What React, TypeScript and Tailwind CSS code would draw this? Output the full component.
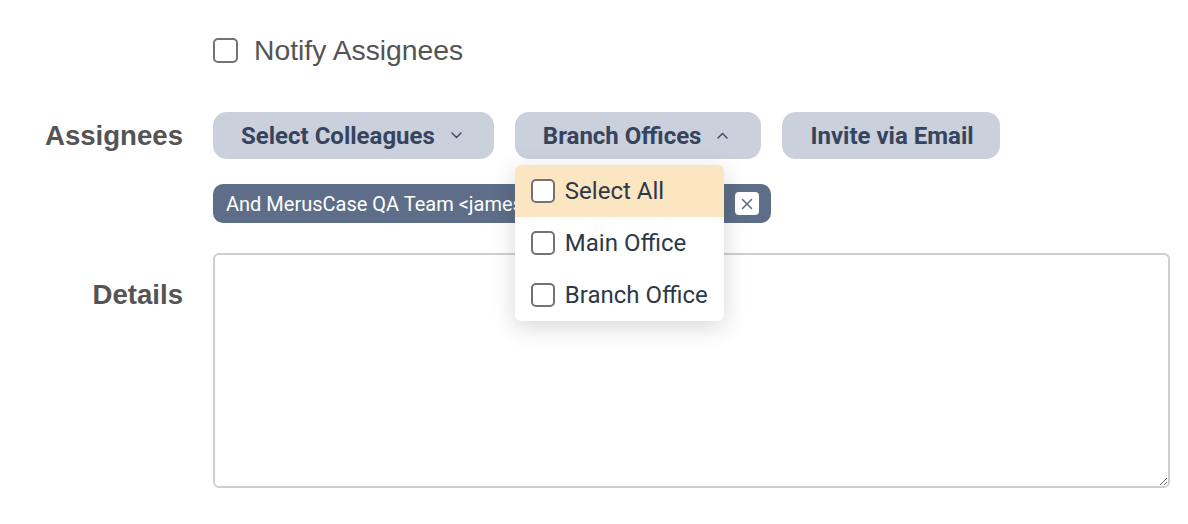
import { useState } from "react";

const offices = ["Select All", "Main Office", "Branch Office"];

function Chevron({ up = false }: { up?: boolean }) {
  return (
    <svg width="11" height="7" viewBox="0 0 11 7" className="shrink-0" aria-hidden>
      <polyline
        points={up ? "1,6 5.5,1.5 10,6" : "1,1 5.5,5.5 10,1"}
        fill="none"
        stroke="currentColor"
        strokeWidth="1.4"
        strokeLinecap="round"
        strokeLinejoin="round"
      />
    </svg>
  );
}

function Box({ size = 25 }: { size?: number }) {
  return (
    <span
      className="inline-block shrink-0 rounded-[5px] border-2 border-[#737373] bg-white"
      style={{ width: size, height: size }}
    />
  );
}

export default function App() {
  const [open] = useState(true);

  return (
    <div className="min-h-[524px] bg-white pt-[34px] font-['Roboto',sans-serif]">
      <div className="grid grid-cols-[183px_957px] gap-x-[30px]">
        {/* notify row */}
        <div />
        <label className="flex h-[32px] items-center gap-4 font-['Liberation_Sans',Arial,sans-serif] text-[28.3px] text-[#545454]">
          <Box />
          <span>Notify Assignees</span>
        </label>

        {/* assignees */}
        <div className="mt-[46px] flex h-[47px] items-center justify-end font-['Liberation_Sans',Arial,sans-serif] text-[27.6px] font-bold text-[#545454]">
          Assignees
        </div>
        <div className="mt-[46px]">
          <div className="flex gap-[21px]">
            <button className="flex h-[47px] items-center gap-4 rounded-[14px] bg-[#cbd0dd] pl-7 pr-[32px] text-[24px] font-bold text-[#36445e]">
              Select Colleagues
              <Chevron />
            </button>
            <div className="relative">
              <button className="flex h-[47px] items-center gap-4 rounded-[14px] bg-[#cbd0dd] pl-7 pr-[33px] text-[24px] font-bold text-[#36445e]">
                Branch Offices
                <Chevron up />
              </button>
              {open && (
                <ul className="absolute left-0 top-[53px] z-10 w-[209px] overflow-hidden rounded-md bg-white shadow-[0_6px_24px_rgba(0,0,0,0.16)]">
                  {offices.map((o, i) => (
                    <li
                      key={o}
                      className={`flex h-[52px] items-center gap-[10px] pl-4 text-[24px] text-[#2d3848] ${
                        i === 0 ? "bg-[#fce5c1]" : ""
                      }`}
                    >
                      <Box size={24} />
                      {o}
                    </li>
                  ))}
                </ul>
              )}
            </div>
            <button className="flex h-[47px] items-center rounded-[14px] bg-[#cbd0dd] pl-7 pr-[26px] text-[24px] font-bold text-[#36445e]">
              Invite via Email
            </button>
          </div>

          <div className="mt-[25px] inline-flex h-[39px] w-[558px] items-center justify-between rounded-[10px] bg-[#5e6e88] pl-[13px] pr-3 text-[20px] text-white">
            <span className="truncate">And MerusCase QA Team &lt;jamesqa@meruscase.com&gt;</span>
            <span className="ml-2 flex h-[23px] w-[24px] shrink-0 items-center justify-center rounded-[4px] bg-white text-[#5e6e88]">
              <svg width="12" height="12" viewBox="0 0 12 12" aria-hidden>
                <path d="M1.5 1.5l9 9M10.5 1.5l-9 9" stroke="currentColor" strokeWidth="1.6" strokeLinecap="round" />
              </svg>
            </span>
          </div>
        </div>

        {/* details */}
        <div className="mt-[30px] pt-[21px] text-right font-['Liberation_Sans',Arial,sans-serif] text-[27.6px] font-bold text-[#545454]">
          Details
        </div>
        <div className="mt-[30px]">
          <textarea className="block h-[235px] w-[957px] rounded-md border-2 border-[#cfcfcf] bg-white outline-none" />
        </div>
      </div>
    </div>
  );
}
